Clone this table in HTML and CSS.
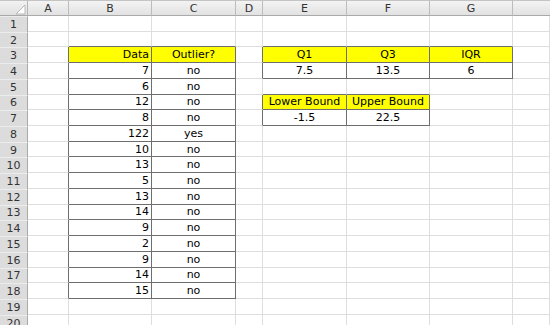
FILE: index.html
```html
<!DOCTYPE html>
<html>
<head>
<meta charset="utf-8">
<link rel="stylesheet" href="styles.css">
</head>
<body>
<div class="sheet">
  <div class="corner"><svg class="tri" width="11" height="11" viewBox="0 0 11 11"><polygon points="10,1 10,10 1,10" fill="#ffffff" stroke="#b8b8b8" stroke-width="1"/></svg></div>
  <div class="ch">A</div><div class="ch">B</div><div class="ch">C</div><div class="ch">D</div><div class="ch">E</div><div class="ch">F</div><div class="ch">G</div><div class="ch last"></div>

  <div class="rh">1</div><div class="c"></div><div class="c"></div><div class="c"></div><div class="c"></div><div class="c"></div><div class="c"></div><div class="c"></div><div class="c"></div>
  <div class="rh">2</div><div class="c"></div><div class="c db"></div><div class="c db"></div><div class="c"></div><div class="c db"></div><div class="c db"></div><div class="c db"></div><div class="c"></div>
  <div class="rh">3</div><div class="c dr"></div><div class="c d y r">Data</div><div class="c d y m">Outlier?</div><div class="c dr"></div><div class="c d y m">Q1</div><div class="c d y m">Q3</div><div class="c d y m">IQR</div><div class="c"></div>
  <div class="rh">4</div><div class="c dr"></div><div class="c d r">7</div><div class="c d m">no</div><div class="c dr"></div><div class="c d m">7.5</div><div class="c d m">13.5</div><div class="c d m">6</div><div class="c"></div>
  <div class="rh">5</div><div class="c dr"></div><div class="c d r">6</div><div class="c d m">no</div><div class="c"></div><div class="c db"></div><div class="c db"></div><div class="c"></div><div class="c"></div>
  <div class="rh">6</div><div class="c dr"></div><div class="c d r">12</div><div class="c d m">no</div><div class="c dr"></div><div class="c d y m">Lower Bound</div><div class="c d y m">Upper Bound</div><div class="c"></div><div class="c"></div>
  <div class="rh">7</div><div class="c dr"></div><div class="c d r">8</div><div class="c d m">no</div><div class="c dr"></div><div class="c d m">-1.5</div><div class="c d m">22.5</div><div class="c"></div><div class="c"></div>
  <div class="rh">8</div><div class="c dr"></div><div class="c d r">122</div><div class="c d m">yes</div><div class="c"></div><div class="c"></div><div class="c"></div><div class="c"></div><div class="c"></div>
  <div class="rh">9</div><div class="c dr"></div><div class="c d r">10</div><div class="c d m">no</div><div class="c"></div><div class="c"></div><div class="c"></div><div class="c"></div><div class="c"></div>
  <div class="rh">10</div><div class="c dr"></div><div class="c d r">13</div><div class="c d m">no</div><div class="c"></div><div class="c"></div><div class="c"></div><div class="c"></div><div class="c"></div>
  <div class="rh">11</div><div class="c dr"></div><div class="c d r">5</div><div class="c d m">no</div><div class="c"></div><div class="c"></div><div class="c"></div><div class="c"></div><div class="c"></div>
  <div class="rh">12</div><div class="c dr"></div><div class="c d r">13</div><div class="c d m">no</div><div class="c"></div><div class="c"></div><div class="c"></div><div class="c"></div><div class="c"></div>
  <div class="rh">13</div><div class="c dr"></div><div class="c d r">14</div><div class="c d m">no</div><div class="c"></div><div class="c"></div><div class="c"></div><div class="c"></div><div class="c"></div>
  <div class="rh">14</div><div class="c dr"></div><div class="c d r">9</div><div class="c d m">no</div><div class="c"></div><div class="c"></div><div class="c"></div><div class="c"></div><div class="c"></div>
  <div class="rh">15</div><div class="c dr"></div><div class="c d r">2</div><div class="c d m">no</div><div class="c"></div><div class="c"></div><div class="c"></div><div class="c"></div><div class="c"></div>
  <div class="rh">16</div><div class="c dr"></div><div class="c d r">9</div><div class="c d m">no</div><div class="c"></div><div class="c"></div><div class="c"></div><div class="c"></div><div class="c"></div>
  <div class="rh">17</div><div class="c dr"></div><div class="c d r">14</div><div class="c d m">no</div><div class="c"></div><div class="c"></div><div class="c"></div><div class="c"></div><div class="c"></div>
  <div class="rh">18</div><div class="c dr"></div><div class="c d r">15</div><div class="c d m">no</div><div class="c"></div><div class="c"></div><div class="c"></div><div class="c"></div><div class="c"></div>
  <div class="rh">19</div><div class="c"></div><div class="c"></div><div class="c"></div><div class="c"></div><div class="c"></div><div class="c"></div><div class="c"></div><div class="c"></div>
  <div class="rh">20</div><div class="c"></div><div class="c"></div><div class="c"></div><div class="c"></div><div class="c"></div><div class="c"></div><div class="c"></div><div class="c"></div>
</div>
</body>
</html>
```
FILE: styles.css
```css
html, body {
  margin: 0;
  padding: 0;
  background: #ffffff;
  overflow: hidden;
}
.sheet {
  width: 550px;
  height: 325px;
  overflow: hidden;
  display: grid;
  grid-template-columns: 28px 41px 83px 84px 27px 84px 83px 83px 1fr;
  grid-template-rows: 16px repeat(20, 15.72px);
  font-family: "DejaVu Sans", Verdana, sans-serif;
  font-size: 11px;
  color: #000;
}
.sheet > div {
  box-sizing: border-box;
  display: flex;
  align-items: center;
  white-space: nowrap;
  overflow: hidden;
}
.corner {
  position: relative;
  background: linear-gradient(#f2f2f2, #e0e0e0);
  border-top: 1px solid #c4c4c4;
  border-right: 1px solid #b4b4b4;
  border-bottom: 1px solid #a9a9a9;
}
.tri {
  position: absolute;
  right: 1px;
  bottom: 0;
}
.ch {
  justify-content: center;
  background: linear-gradient(#f3f3f3, #e2e2e2);
  border-top: 1px solid #c4c4c4;
  border-right: 1px solid #bcbcbc;
  border-bottom: 1px solid #a9a9a9;
  color: #333;
  font-size: 11px;
}
.ch.last {
  border-right: none;
}
.rh {
  justify-content: center;
  background: #dcdcdc;
  border-top: 1px solid #ececec;
  border-right: 1px solid #a9a9a9;
  color: #333;
  font-size: 11px;
}
.c {
  border-right: 1px solid #dedede;
  border-bottom: 1px solid #dedede;
  padding: 0 2px;
}
.c.d {
  border-right-color: #6e6e6e;
  border-bottom-color: #6e6e6e;
}
.c.dr {
  border-right-color: #6e6e6e;
}
.c.db {
  border-bottom-color: #6e6e6e;
}
.y {
  background: #ffff00;
}
.r {
  justify-content: flex-end;
}
.m {
  justify-content: center;
}
```
